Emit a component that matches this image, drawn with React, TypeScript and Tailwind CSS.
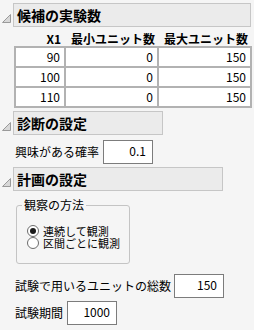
const font = { fontFamily: '"Noto Sans CJK JP", "Noto Sans", sans-serif' };

const Tri = () => (
  <svg width="9" height="9" viewBox="0 0 9 9" className="shrink-0">
    <path d="M0.5 8.5 L8.5 0.5 L8.5 8.5 Z" fill="#d8d8d8" stroke="#9a9a9a" strokeWidth="1" />
  </svg>
);

const Header = ({ title, width }: { title: string; width: string }) => (
  <div className="flex items-center">
    <div className="w-[13px] flex justify-start pl-[2px] pt-[6px]">
      <Tri />
    </div>
    <div
      className={`${width} h-[24px] bg-[#ebebeb] border border-[#c6c6c6] flex items-center pl-[3px] text-[14px] font-bold text-black leading-none`}
    >
      {title}
    </div>
  </div>
);

const Field = ({ value, w = 'w-[50px]' }: { value: string; w?: string }) => (
  <div className={`${w} h-[24px] bg-white border border-[#7c7c7c] text-right pr-[6px] pt-[1px] text-[12px] leading-[18px]`}>
    {value}
  </div>
);

const Radio = ({ on, label }: { on?: boolean; label: string }) => (
  <div className="flex items-center gap-[4px] h-[12px]">
    <span className="w-[12px] h-[12px] rounded-full border border-[#6c6c6c] bg-white flex items-center justify-center shrink-0">
      {on && <span className="w-[6px] h-[6px] rounded-full bg-[#1a1a1a]" />}
    </span>
    <span className="text-[11px] leading-[12px]">{label}</span>
  </div>
);

const rows = [
  ['90', '0', '150'],
  ['100', '0', '150'],
  ['110', '0', '150'],
];

export default function App() {
  return (
    <div className="w-[254px] h-[330px] bg-[#f5f5f5] text-black overflow-hidden pt-[3px]" style={font}>
      <Header title="候補の実験数" width="w-[238px]" />

      {/* table */}
      <div className="pl-[14px] mt-[4px]">
        <div className="flex text-[12px] font-bold h-[14px] items-end leading-none">
          <div className="w-[50px] text-right pr-[3px]">X1</div>
          <div className="w-[93px] text-right pr-[2px]">最小ユニット数</div>
          <div className="w-[93px] text-right pr-[2px]">最大ユニット数</div>
        </div>
        <table className="mt-[1px] border-collapse text-[12px] bg-white">
          <tbody>
            {rows.map((r, i) => (
              <tr key={i} className="h-[20px]">
                <td className="w-[50px] border-2 border-[#b2b2b2] text-right pr-[4px] leading-none">{r[0]}</td>
                <td className="w-[93px] border-2 border-[#b2b2b2] text-right pr-[4px] leading-none">{r[1]}</td>
                <td className="w-[93px] border-2 border-[#b2b2b2] text-right pr-[4px] leading-none">{r[2]}</td>
              </tr>
            ))}
          </tbody>
        </table>
      </div>

      <div className="mt-[3px]">
        <Header title="診断の設定" width="w-[150px]" />
      </div>
      <div className="flex items-center pl-[15px] mt-[5px] gap-[4px]">
        <span className="text-[12px] leading-none">興味がある確率</span>
        <Field value="0.1" />
      </div>

      <div className="mt-[3px]">
        <Header title="計画の設定" width="w-[210px]" />
      </div>

      <fieldset className="ml-[16px] mt-[8px] w-[114px] h-[65px] border border-[#c4c4c4] rounded-[3px] pl-[10px] pr-0 pb-0 pt-[14px]">
        <legend className="text-[12px] leading-none px-[2px] ml-[-5px]">観察の方法</legend>
        <Radio on label="連続して観測" />
        <Radio label="区間ごとに観測" />
      </fieldset>

      <div className="flex items-center pl-[15px] mt-[10px] gap-[3px]">
        <span className="text-[12px] leading-none">試験で用いるユニットの総数</span>
        <Field value="150" />
      </div>
      <div className="flex items-center pl-[15px] mt-[3px] gap-[4px]">
        <span className="text-[12px] leading-none">試験期間</span>
        <Field value="1000" />
      </div>
    </div>
  );
}
